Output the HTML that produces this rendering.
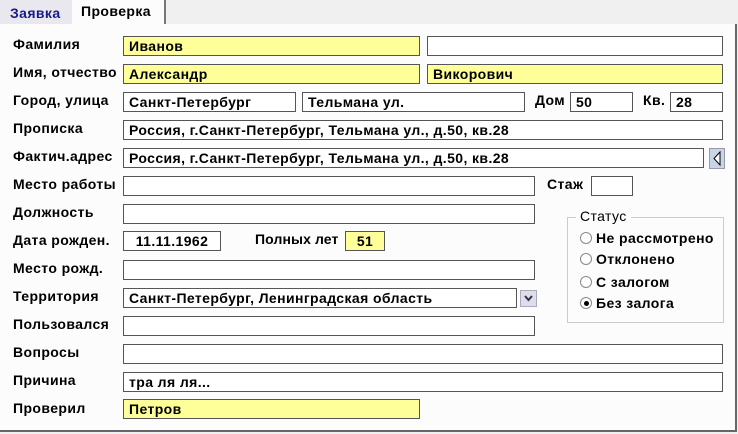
<!DOCTYPE html>
<html><head><meta charset="utf-8"><style>
body{margin:0;width:738px;height:434px;background:#f0f0f0;font-family:"Liberation Sans",sans-serif;font-size:14px;font-weight:bold;letter-spacing:0.4px;color:#000;position:relative;overflow:hidden}
.a{position:absolute;white-space:nowrap}
.panel{position:absolute;left:0;top:24px;width:735px;height:406px;background:#fcfcfc;border-right:2px solid #666;border-bottom:2px solid #666}
.l{position:absolute;left:13px}
.i{position:absolute;border:1px solid #555;background:#fff;box-sizing:border-box;height:20px;padding-left:5px;line-height:18px;white-space:nowrap;overflow:hidden}
.y{background:#ffff99}
.c{text-align:center;padding-left:0}
.r{position:absolute;left:580px;width:12px;height:12px;border:1px solid #888;border-radius:50%;background:#fff;box-sizing:border-box}
</style></head><body>
<div class="a" style="left:0;top:0;width:72px;height:24px;background:#e8e8ee"></div>
<div class="a" style="left:10px;top:5px;color:#1a1a8c">Заявка</div>
<div class="a" style="left:72px;top:0;width:92px;height:25px;background:#fcfcfc;border-right:2px solid #777"></div>
<div class="a" style="left:81px;top:3px">Проверка</div>
<div class="panel"></div>

<div class="l a" style="top:36px">Фамилия</div>
<div class="i y" style="left:123px;top:36px;width:297px">Иванов</div>
<div class="i" style="left:427px;top:36px;width:296px"></div>

<div class="l a" style="top:64px">Имя, отчество</div>
<div class="i y" style="left:123px;top:64px;width:297px">Александр</div>
<div class="i y" style="left:427px;top:64px;width:296px">Викорович</div>

<div class="l a" style="top:92px">Город, улица</div>
<div class="i" style="left:123px;top:92px;width:173px">Санкт-Петербург</div>
<div class="i" style="left:302px;top:92px;width:223px">Тельмана ул.</div>
<div class="a" style="left:535px;top:92px">Дом</div>
<div class="i" style="left:570px;top:92px;width:63px">50</div>
<div class="a" style="left:643px;top:92px">Кв.</div>
<div class="i" style="left:670px;top:92px;width:53px">28</div>

<div class="l a" style="top:120px">Прописка</div>
<div class="i" style="left:123px;top:120px;width:600px">Россия, г.Санкт-Петербург, Тельмана ул., д.50, кв.28</div>

<div class="l a" style="top:148px">Фактич.адрес</div>
<div class="i" style="left:123px;top:148px;width:581px">Россия, г.Санкт-Петербург, Тельмана ул., д.50, кв.28</div>
<div class="a" style="left:709px;top:148px;width:14px;height:19px;background:#c8d4e8;border:1px solid #99a"><svg width="14" height="19"><path d="M10 3 L4 9.5 L10 16 Z" fill="#fff" stroke="#000"/></svg></div>

<div class="l a" style="top:176px">Место работы</div>
<div class="i" style="left:123px;top:176px;width:412px"></div>
<div class="a" style="left:547px;top:176px">Стаж</div>
<div class="i" style="left:591px;top:176px;width:42px"></div>

<div class="l a" style="top:204px">Должность</div>
<div class="i" style="left:123px;top:204px;width:412px"></div>

<div class="l a" style="top:232px">Дата рожден.</div>
<div class="i c" style="left:123px;top:231px;width:98px">11.11.1962</div>
<div class="a" style="left:255px;top:231px;letter-spacing:0.1px">Полных лет</div>
<div class="i y c" style="left:345px;top:231px;width:40px">51</div>

<div class="l a" style="top:260px">Место рожд.</div>
<div class="i" style="left:123px;top:260px;width:412px"></div>

<div class="l a" style="top:288px">Территория</div>
<div class="i" style="left:123px;top:288px;width:394px">Санкт-Петербург, Ленинградская область</div>
<div class="a" style="left:520px;top:290px;width:15px;height:15px;background:#dde;border:1px solid #aab"><svg width="15" height="15"><path d="M4 5 L7.5 9 L11 5" fill="none" stroke="#334" stroke-width="2"/></svg></div>

<div class="l a" style="top:316px">Пользовался</div>
<div class="i" style="left:123px;top:316px;width:412px"></div>

<div class="l a" style="top:344px">Вопросы</div>
<div class="i" style="left:123px;top:344px;width:600px"></div>

<div class="l a" style="top:372px">Причина</div>
<div class="i" style="left:123px;top:372px;width:600px">тра ля ля...</div>

<div class="l a" style="top:400px">Проверил</div>
<div class="i y" style="left:123px;top:399px;width:297px">Петров</div>

<div class="a" style="left:567px;top:217px;width:157px;height:106px;border:1px solid #ccc;box-sizing:border-box"></div>
<div class="a" style="left:576px;top:208px;background:#fcfcfc;padding:0 4px;font-weight:normal">Статус</div>
<div class="r" style="top:232px"></div><div class="a" style="left:596px;top:230px">Не рассмотрено</div>
<div class="r" style="top:253px"></div><div class="a" style="left:596px;top:251px">Отклонено</div>
<div class="r" style="top:276px"></div><div class="a" style="left:596px;top:274px">С залогом</div>
<div class="r" style="top:297px"><div style="position:absolute;left:2.5px;top:2.5px;width:5px;height:5px;border-radius:50%;background:#000"></div></div><div class="a" style="left:596px;top:295px">Без залога</div>
</body></html>
